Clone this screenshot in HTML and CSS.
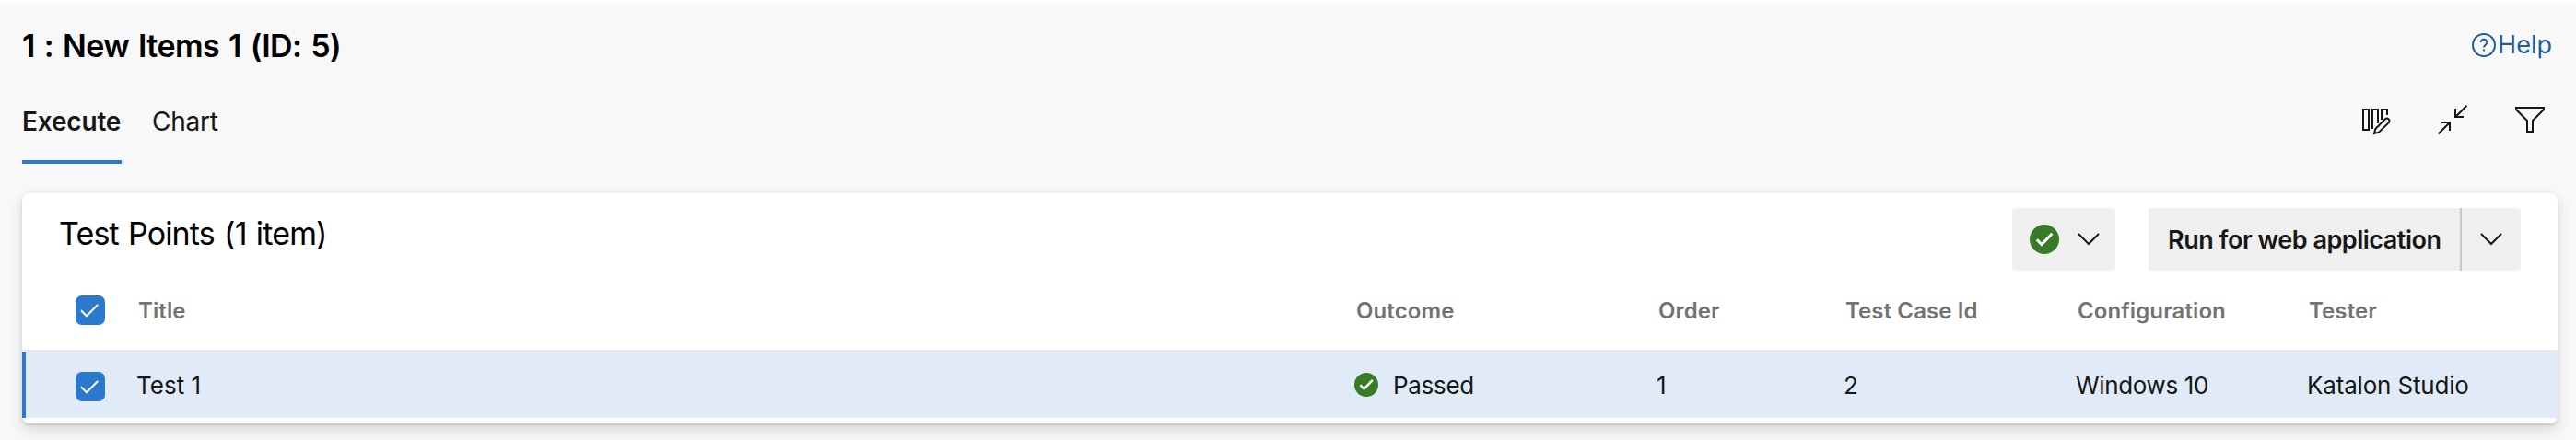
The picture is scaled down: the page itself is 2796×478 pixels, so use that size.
FILE: index.html
```html
<!DOCTYPE html>
<html lang="en">
<head>
<meta charset="utf-8">
<title>New Items 1</title>
<link rel="stylesheet" href="styles.css">
</head>
<body>
<div class="page">
  <header class="page-header">
    <h1 class="page-title">1 : New Items 1 (ID: 5)</h1>
    <a class="help" href="#">
      <svg width="26" height="26" viewBox="0 0 26 26" fill="none" stroke="currentColor" stroke-width="2"><circle cx="13" cy="13" r="12"/><path d="M9.6 10a3.4 3.3 0 1 1 6.8 0c0 2.5-3.4 2.9-3.4 5.6"/><path d="M13 17.6v2"/></svg>
      <span>Help</span>
    </a>
  </header>
  <div class="tab-bar">
    <nav class="tabs">
      <a class="tab tab-active" href="#">Execute</a>
      <a class="tab" href="#">Chart</a>
    </nav>
    <div class="view-actions">
      <svg width="36" height="36" viewBox="0 0 36 36"><path d="M5 7h6v22H5zM15 28V7h6v15M25 18V7h6v6"/><path d="M17 33l1.3-5L29 17.3a2.7 2.7 0 0 1 3.8 3.8L22 31.7z"/></svg>
      <svg width="36" height="36" viewBox="0 0 36 36"><path d="M33.5 2.7 21 15.2M21 6v9h9M2.5 33.5 15 21M6 21h9v9"/></svg>
      <svg width="36" height="36" viewBox="0 0 36 36"><path d="M3 5h30v2L21 19v12h-6V19L3 7z"/></svg>
    </div>
  </div>
  <main class="card">
    <div class="card-header">
      <h2 class="card-title">Test Points (1 item)</h2>
      <div class="buttons">
        <button class="button outcome-button">
          <svg width="32" height="32" viewBox="0 0 32 32"><circle class="pass-disc" cx="16" cy="16" r="16"/><path class="pass-tick" d="M7.8 16.3l5.2 5.2L24.4 9.8"/></svg>
          <svg class="chevron" width="24" height="14" viewBox="0 0 24 14"><path d="M1 1l11 11L23 1"/></svg>
        </button>
        <div class="split-button">
          <button class="button run-button">Run for web application</button>
          <button class="button more-button"><svg class="chevron" width="24" height="14" viewBox="0 0 24 14"><path d="M1 1l11 11L23 1"/></svg></button>
        </div>
      </div>
    </div>
    <div class="grid-row grid-head">
      <span class="check"><svg width="32" height="32" viewBox="0 0 32 32"><path d="M6 16.3l6 6L24.2 10"/></svg></span>
      <span>Title</span><span>Outcome</span><span>Order</span><span>Test Case Id</span><span>Configuration</span><span>Tester</span>
    </div>
    <div class="grid-row grid-item">
      <span class="check"><svg width="32" height="32" viewBox="0 0 32 32"><path d="M6 16.3l6 6L24.2 10"/></svg></span>
      <span class="name">Test 1</span>
      <span class="outcome"><svg width="26" height="26" viewBox="0 0 32 32"><circle class="pass-disc" cx="16" cy="16" r="16"/><path class="pass-tick" d="M7.8 16.3l5.2 5.2L24.4 9.8"/></svg>Passed</span>
      <span>1</span><span>2</span><span class="configuration">Windows 10</span><span class="tester">Katalon Studio</span>
    </div>
  </main>
</div>
</body>
</html>
```
FILE: styles.css
```css
* { box-sizing: border-box; }
body {
  margin: 0;
  background: #f8f8f8;
  color: #171717;
  font-family: Inter, "Liberation Sans", sans-serif;
}
svg { display: block; flex: none; }
a { color: inherit; text-decoration: none; }
.page {
  height: 478px;
  overflow: hidden;
  border-top: 6px solid #fbfbfb;
}
.page-header {
  display: flex;
  justify-content: space-between;
  align-items: center;
  height: 84px;
  padding: 0 26px 0 24px;
}
.page-title {
  margin: 0;
  padding-top: 4px;
  font-size: 34px;
  line-height: 40px;
  font-weight: 600;
  letter-spacing: -0.6px;
  word-spacing: 2px;
  color: #000;
}
.help {
  display: flex;
  align-items: center;
  gap: 2px;
  padding-top: 2px;
  font-size: 27px;
  line-height: 32px;
  color: #1f5c9f;
}
.tab-bar {
  display: flex;
  justify-content: space-between;
  height: 88px;
  padding: 0 32px 0 24px;
}
.tabs { display: flex; gap: 33px; }
.tab {
  border-bottom: 4px solid transparent;
  font-size: 28px;
  line-height: 84px;
  letter-spacing: -0.25px;
}
.tab-active {
  width: 108px;
  border-color: #2b79cd;
  font-weight: 600;
  letter-spacing: -0.18px;
}
.view-actions {
  display: flex;
  gap: 48px;
  padding-top: 22px;
}
.view-actions path { fill: none; stroke: #171717; stroke-width: 2; }
.card {
  height: 250px;
  margin: 32px 20px 0 24px;
  border-radius: 8px;
  background: #fff;
  box-shadow: 0 6.4px 14.4px rgba(0, 0, 0, .132), 0 1.2px 3.6px rgba(0, 0, 0, .108);
}
.card-header {
  display: flex;
  justify-content: space-between;
  height: 84px;
  padding: 16px 40px 0;
}
.card-title {
  margin: 0;
  font-size: 34px;
  line-height: 56px;
  font-weight: 400;
  letter-spacing: -0.85px;
  word-spacing: 1.5px;
  color: #000;
}
.buttons { display: flex; gap: 36px; }
.button {
  display: flex;
  align-items: center;
  height: 68px;
  border: 0;
  border-radius: 4px;
  background: #efefef;
  color: #171717;
  font: 600 27px Inter, "Liberation Sans", sans-serif;
}
.outcome-button { width: 112px; gap: 20px; padding: 0 0 0 19px; }
.split-button { display: flex; }
.run-button {
  width: 338px;
  padding: 0 0 0 21px;
  letter-spacing: -0.48px;
  white-space: nowrap;
  border-radius: 4px 0 0 4px;
}
.more-button {
  width: 66px;
  padding: 0 0 0 20px;
  border-left: 2px solid #c8c8c8;
  border-radius: 0 4px 4px 0;
}
.chevron { fill: none; stroke: #171717; stroke-width: 2; }
.pass-disc { fill: #387b26; }
.pass-tick { fill: none; stroke: #fff; stroke-width: 3; }
.grid-row {
  display: grid;
  grid-template-columns: 66px 1322px 328px 203px 252px 251px 1fr;
  align-items: center;
  padding-left: 58px;
}
.grid-head {
  height: 88px;
  border-bottom: 2px solid #eaeaea;
  font-size: 24px;
  font-weight: 600;
  letter-spacing: 0.1px;
  color: #737373;
}
.grid-head span:not(.check) { padding-left: 2px; }
.grid-item {
  height: 72px;
  background: linear-gradient(#2b79cd, #2b79cd) left / 4px 100% no-repeat #e1ebf7;
  font-size: 26px;
}
.check {
  width: 32px;
  height: 32px;
  border-radius: 7px;
  background: #2b79cd;
}
.check path { fill: none; stroke: #fff; stroke-width: 2; }
.grid-item .check { margin-top: 4px; }
.outcome {
  display: flex;
  align-items: center;
  gap: 16px;
  letter-spacing: -0.3px;
}
.configuration { letter-spacing: -0.35px; }
.tester { letter-spacing: -0.18px; }
```
